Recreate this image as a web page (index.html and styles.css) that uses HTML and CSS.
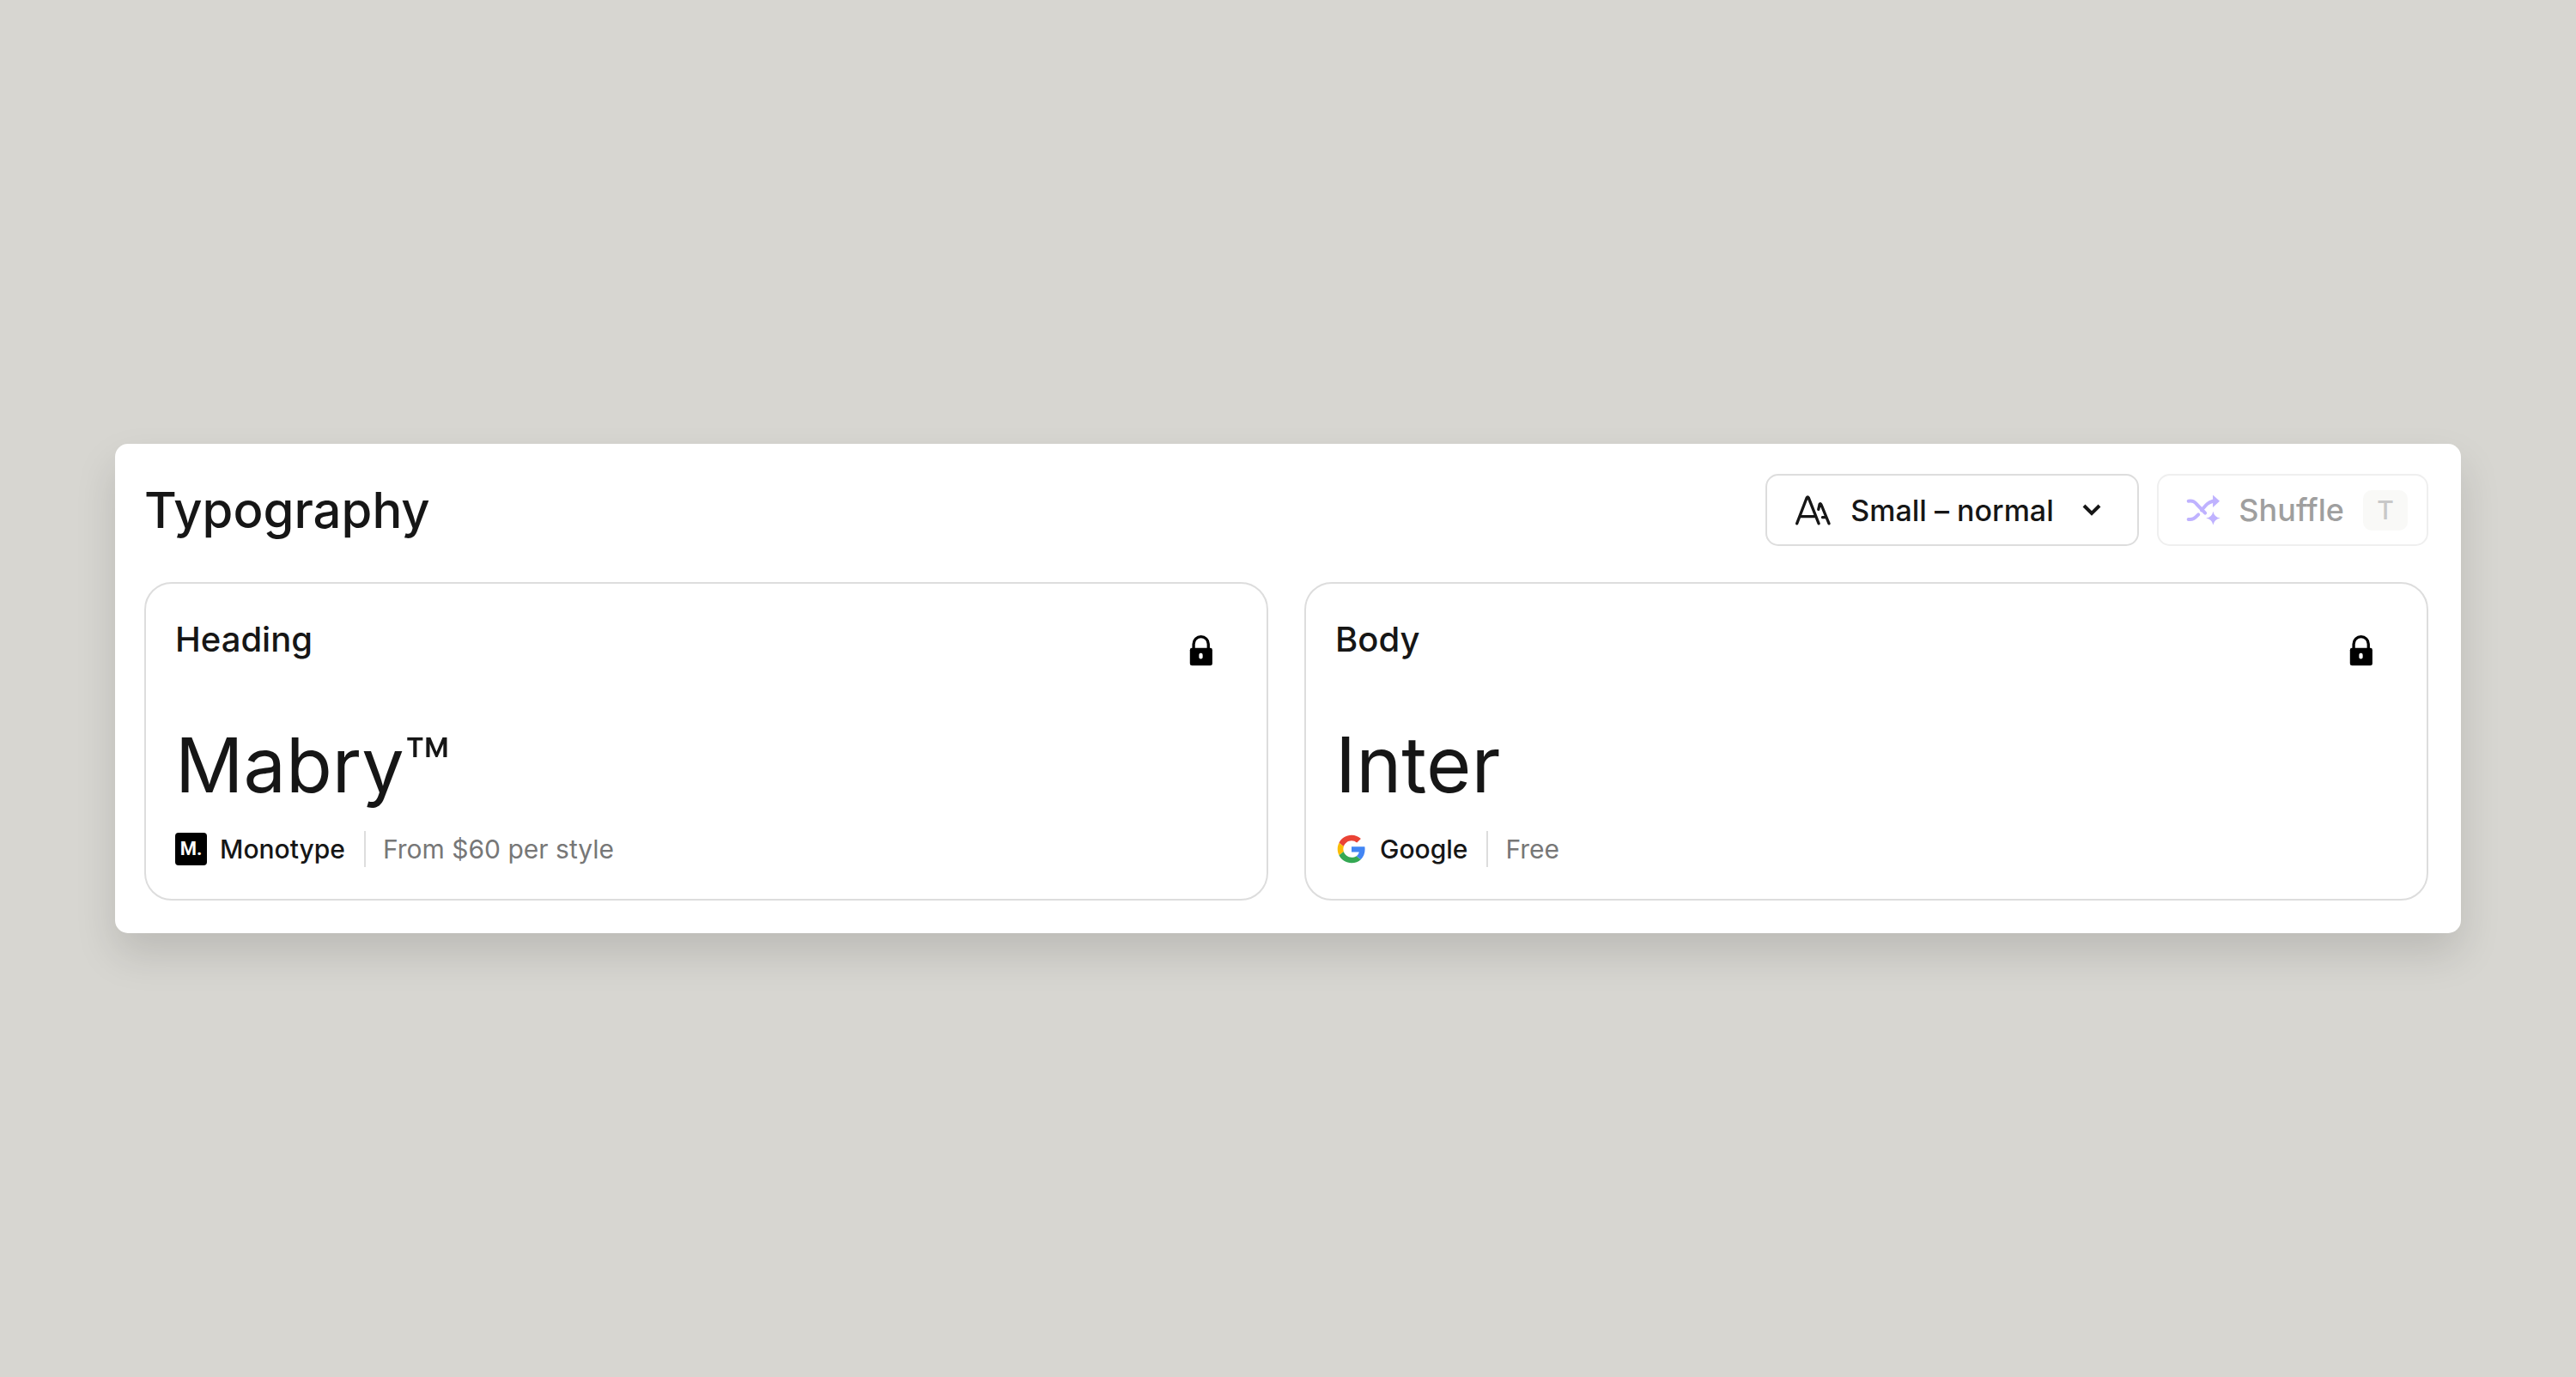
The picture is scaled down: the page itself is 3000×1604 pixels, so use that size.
FILE: index.html
```html
<!DOCTYPE html>
<html lang="en">
<head>
    <meta charset="UTF-8">
    <meta name="viewport" content="width=device-width, initial-scale=1.0">
    <title>Typography</title>
    <link rel="stylesheet" href="styles.css">
</head>
<body>
    <main class="panel">
        <header class="panel-header">
            <h1 class="panel-title">Typography</h1>

            <div class="actions">
                <!-- Type scale -->
                <div class="control scale">
                    <label class="scale-label" for="type-scale" aria-label="Type scale">
                        <svg class="scale-icon" viewBox="0 0 130 108" aria-hidden="true">
                            <path d="M8 102 43 11Q46 5 49 11L85 102M20 77H72M84 52 88 34Q91 29 94 36L121 102M98 80H111"/>
                        </svg>
                    </label>
                    <select id="type-scale" name="type_scale">
                        <option value="small-normal" selected>Small – normal</option>
                    </select>
                    <svg class="chevron" viewBox="0 0 20 12" aria-hidden="true">
                        <path d="M1 1l9 9 9-9"/>
                    </svg>
                </div>

                <!-- Shuffle -->
                <button type="button" class="control shuffle" disabled>
                    <svg class="shuffle-icon" viewBox="0 0 124 114" aria-hidden="true">
                        <path class="line" d="M8 26C24 24 30 28 40 40L67 68M8 90C24 92 30 86 43 73M54 58C70 40 74 32 94 26"/>
                        <path d="M94 4 118 26 94 48ZM95 62Q99 82 120 86Q99 90 95 110Q91 90 70 86Q91 82 95 62Z"/>
                    </svg>
                    <span>Shuffle</span>
                    <kbd>T</kbd>
                </button>
            </div>
        </header>

        <div class="cards">
            <!-- Heading font -->
            <section class="card">
                <div class="card-top">
                    <h2>Heading</h2>
                    <button type="button" class="lock" aria-label="Unlock heading font">
                        <svg viewBox="0 0 84 112" aria-hidden="true">
                            <path class="shackle" d="M15 52V34a26 26 0 0 1 52 0V52"/>
                            <rect x="2" y="48" width="79" height="62" rx="7"/>
                            <rect class="keyhole" x="34" y="66" width="13" height="20" rx="6"/>
                        </svg>
                    </button>
                </div>
                <p class="font-name mabry">Mabry™</p>
                <div class="meta">
                    <span class="logo"><span class="monotype">M.</span></span>
                    <a href="#monotype">Monotype</a>
                    <span class="price">From $60 per style</span>
                </div>
            </section>

            <!-- Body font -->
            <section class="card">
                <div class="card-top">
                    <h2>Body</h2>
                    <button type="button" class="lock" aria-label="Unlock body font">
                        <svg viewBox="0 0 84 112" aria-hidden="true">
                            <path class="shackle" d="M15 52V34a26 26 0 0 1 52 0V52"/>
                            <rect x="2" y="48" width="79" height="62" rx="7"/>
                            <rect class="keyhole" x="34" y="66" width="13" height="20" rx="6"/>
                        </svg>
                    </button>
                </div>
                <p class="font-name">Inter</p>
                <div class="meta">
                    <span class="logo">
                        <svg viewBox="-4 -4 56 56" aria-hidden="true">
                            <path fill="#ea4335" d="M24 9.5c3.54 0 6.71 1.22 9.21 3.6l6.85-6.85C35.9 2.38 30.47 0 24 0 14.62 0 6.51 5.38 2.56 13.22l7.98 6.19C12.43 13.72 17.74 9.5 24 9.5z"/>
                            <path fill="#4285f4" d="M46.98 24.55c0-1.57-.15-3.09-.38-4.55H24v9.02h12.94c-.58 2.96-2.26 5.48-4.78 7.18l7.73 6c4.51-4.18 7.09-10.36 7.09-17.65z"/>
                            <path fill="#fbbc05" d="M10.53 28.59c-.48-1.45-.76-2.99-.76-4.59s.27-3.14.76-4.59l-7.98-6.19C.92 16.46 0 20.12 0 24c0 3.88.92 7.54 2.56 10.78l7.97-6.19z"/>
                            <path fill="#34a853" d="M24 48c6.48 0 11.93-2.13 15.89-5.81l-7.73-6c-2.15 1.45-4.92 2.3-8.16 2.3-6.26 0-11.57-4.22-13.47-9.91l-7.98 6.19C6.51 42.62 14.62 48 24 48z"/>
                        </svg>
                    </span>
                    <a href="#google">Google</a>
                    <span class="price">Free</span>
                </div>
            </section>
        </div>
    </main>
</body>
</html>
```
FILE: styles.css
```css
* {
    box-sizing: border-box;
}

body {
    display: flex;
    align-items: center;
    min-height: 100vh;
    margin: 0;
    padding: 0 134px;
    font-family: Inter, sans-serif;
    font-weight: 500;
    color: #161616;
    background-color: #d7d6d1;
}

h1, h2, p {
    margin: 0;
    font-weight: 500;
}

button, select {
    font: inherit;
    color: inherit;
}

.panel {
    flex: 1;
    padding: 35px 38px 38px 34px;
    border-radius: 15px;
    background: #fff;
    box-shadow: 0 24px 48px rgba(0, 0, 0, 0.13);
}

.panel-header {
    display: flex;
    justify-content: space-between;
    align-items: center;
    margin-bottom: 42px;
}

.panel-title {
    font-size: 58px;
    line-height: 84px;
}

.actions {
    display: flex;
    gap: 21px;
}

.control {
    display: flex;
    align-items: center;
    height: 84px;
    border: 2px solid #ddd;
    border-radius: 15px;
    background: #fff;
    font-size: 36px;
}

/* Type scale drop-down */
.scale {
    padding: 0 43px 0 32px;
    font-size: 34px;
}

.scale-label {
    display: flex;
    margin-right: 22px;
}

.scale-icon {
    width: 43px;
    height: 36px;
    fill: none;
    stroke: #161616;
    stroke-width: 10;
    stroke-linecap: round;
}

.scale select {
    appearance: none;
    padding: 0;
    border: none;
    background: none;
}

.chevron {
    width: 20px;
    height: 12px;
    margin-left: 34px;
    overflow: visible;
    fill: none;
    stroke: #161616;
    stroke-width: 4;
}

/* Shuffle button */
.shuffle {
    padding: 0 22px 0 32px;
    border-color: #efefef;
    color: #9f9f9f;
}

.shuffle-icon {
    width: 41px;
    height: 38px;
    margin-right: 20px;
    fill: #bfb2ff;
}

.shuffle-icon .line {
    fill: none;
    stroke: #bfb2ff;
    stroke-width: 12;
    stroke-linecap: round;
}

.shuffle kbd {
    width: 52px;
    margin-left: 22px;
    border-radius: 10px;
    background: #f9f9f7;
    font-family: inherit;
    font-size: 30px;
    line-height: 47px;
    color: #c8c8c8;
}

/* Font cards */
.cards {
    display: grid;
    grid-template-columns: 1fr 1fr;
    gap: 42px;
}

.card {
    padding: 37px 36px 37px 34px;
    border: 2px solid #ddd;
    border-radius: 32px;
}

.card-top {
    display: flex;
    justify-content: space-between;
    align-items: flex-start;
    margin-bottom: 42px;
}

.card-top h2 {
    font-size: 40px;
    line-height: 56px;
}

.lock {
    display: flex;
    justify-content: center;
    align-items: center;
    width: 80px;
    height: 80px;
    padding: 0;
    border: none;
    background: none;
    cursor: pointer;
}

.lock svg {
    width: 28px;
    height: 37px;
}

.shackle {
    fill: none;
    stroke: #000;
    stroke-width: 10;
}

.keyhole {
    fill: #fff;
}

.font-name {
    margin-bottom: 25px;
    font-size: 90px;
    font-weight: 400;
    line-height: 104px;
}

.mabry {
    font-size: 88px;
}

.meta {
    display: flex;
    align-items: center;
    font-size: 30px;
    line-height: 42px;
}

.meta a {
    color: inherit;
    text-decoration: none;
}

.logo {
    display: flex;
    width: 38px;
    height: 38px;
    margin-right: 14px;
}

.monotype {
    width: 37px;
    border-radius: 4px;
    background: #000;
    color: #fff;
    font-family: Roboto, sans-serif;
    font-size: 22px;
    font-weight: 700;
    line-height: 38px;
    text-align: center;
}

.price {
    margin-left: 22px;
    padding-left: 20px;
    border-left: 2px solid #ddd;
    font-weight: 400;
    color: #777;
}
```
